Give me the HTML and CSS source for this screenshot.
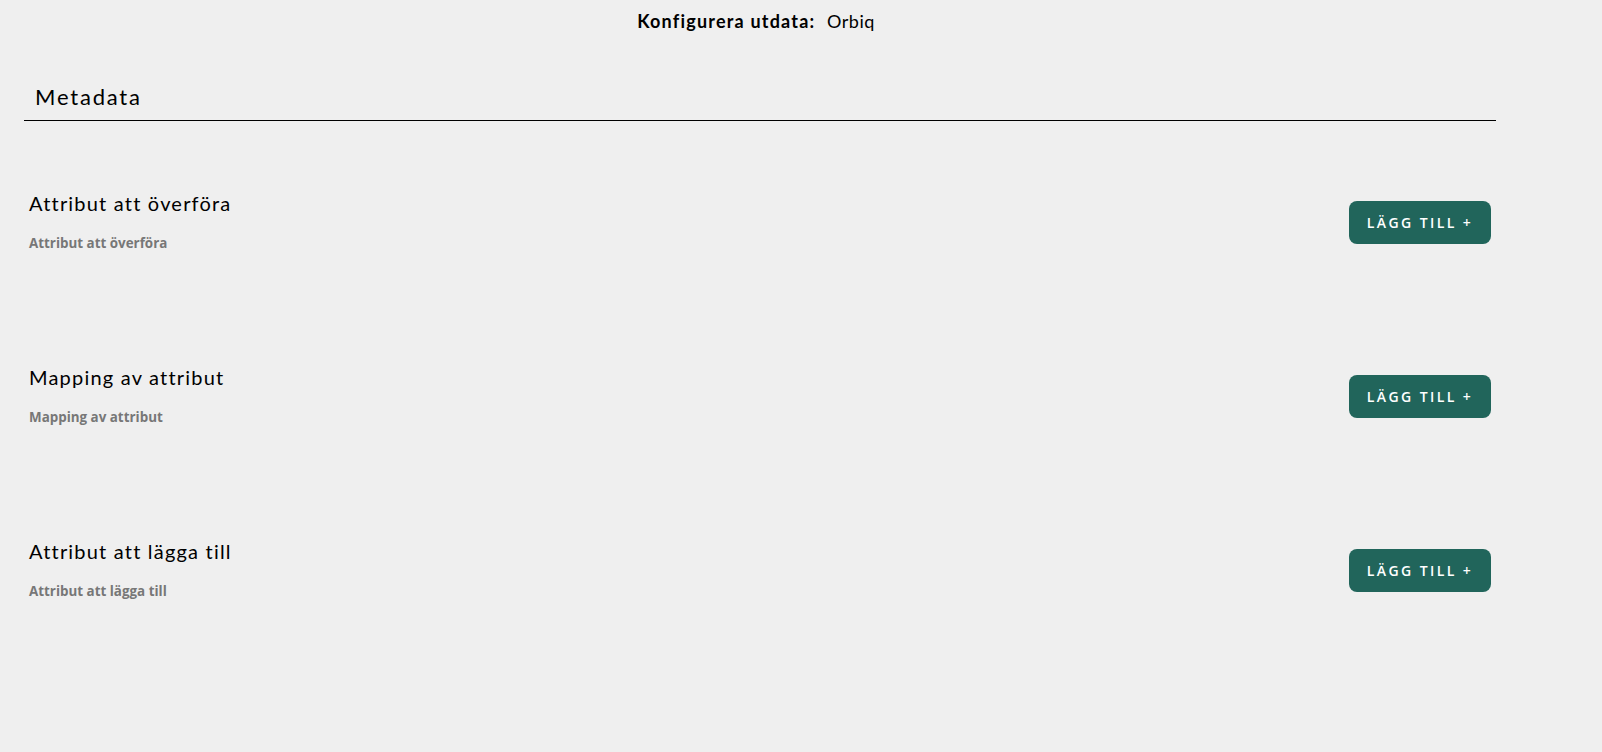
FILE: index.html
```html
<!DOCTYPE html>
<html lang="sv">
<head>
  <meta charset="UTF-8">
  <title>Konfigurera utdata</title>
  <link rel="stylesheet" href="styles.css">
</head>
<body>
  <div class="page">
    <div class="title">
      <span class="title-label">Konfigurera utdata:</span>
      <span class="title-value">Orbiq</span>
    </div>

    <div class="meta-head">Metadata</div>

    <div class="section">
      <div class="section-text">
        <h3>Attribut att överföra</h3>
        <div class="sub">Attribut att överföra</div>
      </div>
      <button class="add-btn">LÄGG TILL +</button>
    </div>

    <div class="section">
      <div class="section-text">
        <h3>Mapping av attribut</h3>
        <div class="sub">Mapping av attribut</div>
      </div>
      <button class="add-btn">LÄGG TILL +</button>
    </div>

    <div class="section">
      <div class="section-text">
        <h3>Attribut att lägga till</h3>
        <div class="sub">Attribut att lägga till</div>
      </div>
      <button class="add-btn">LÄGG TILL +</button>
    </div>
  </div>
</body>
</html>
```

FILE: styles.css
```css
* {
  margin: 0;
  padding: 0;
  box-sizing: border-box;
}

body {
  background: #efefef;
  font-family: 'Lato', sans-serif;
  color: #000;
}

.page {
  width: 1472px;
  margin-left: 24px;
}

.title {
  text-align: center;
  padding: 10px 8px 0 0;
  font-size: 18px;
  line-height: 22px;
}

.title-label {
  font-weight: bold;
  letter-spacing: 1.2px;
  margin-right: 7px;
}

.title-value {
  letter-spacing: 0.5px;
}

.meta-head {
  margin-top: 52px;
  padding: 0 0 10px 11px;
  font-size: 22px;
  line-height: 26px;
  letter-spacing: 1.8px;
  border-bottom: 1px solid #000;
}

.section {
  display: flex;
  justify-content: space-between;
  align-items: center;
  padding: 70px 5px 42px 5px;
}

.section h3 {
  font-size: 20px;
  line-height: 24px;
  font-weight: normal;
  letter-spacing: 1.2px;
}

.section .sub {
  margin-top: 18px;
  font-family: 'Open Sans', sans-serif;
  font-weight: bold;
  font-size: 13.4px;
  line-height: 20px;
  color: #777;
}

.add-btn {
  width: 142px;
  height: 43px;
  border: none;
  border-radius: 8px;
  background: #21655b;
  color: #fff;
  font-family: 'Open Sans', sans-serif;
  font-weight: 600;
  font-size: 14px;
  letter-spacing: 2.4px;
  cursor: pointer;
}
```
